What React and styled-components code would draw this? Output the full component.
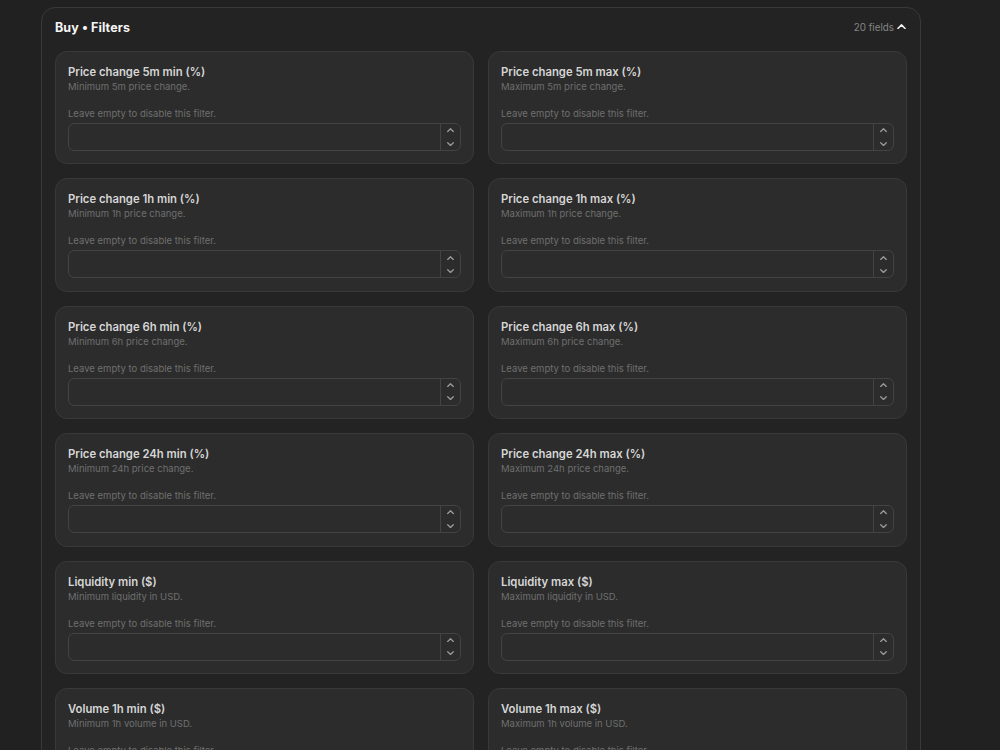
import React from 'react';
import styled, { createGlobalStyle } from 'styled-components';

const fields = [
    ['Price change 5m min (%)', 'Minimum 5m price change.'],
    ['Price change 5m max (%)', 'Maximum 5m price change.'],
    ['Price change 1h min (%)', 'Minimum 1h price change.'],
    ['Price change 1h max (%)', 'Maximum 1h price change.'],
    ['Price change 6h min (%)', 'Minimum 6h price change.'],
    ['Price change 6h max (%)', 'Maximum 6h price change.'],
    ['Price change 24h min (%)', 'Minimum 24h price change.'],
    ['Price change 24h max (%)', 'Maximum 24h price change.'],
    ['Liquidity min ($)', 'Minimum liquidity in USD.'],
    ['Liquidity max ($)', 'Maximum liquidity in USD.'],
    ['Volume 1h min ($)', 'Minimum 1h volume in USD.'],
    ['Volume 1h max ($)', 'Maximum 1h volume in USD.'],
    ['Volume 24h min ($)', 'Minimum 24h volume in USD.'],
    ['Volume 24h max ($)', 'Maximum 24h volume in USD.'],
];

const Chevron = ({ up, size = 8, color = '#9a9a9a', width = 1.3 }) => (
    <svg width={size} height={size * 0.6} viewBox="0 0 10 6" fill="none">
        <path
            d={up ? 'M1 5L5 1L9 5' : 'M1 1L5 5L9 1'}
            stroke={color}
            strokeWidth={width * (10 / size)}
            strokeLinecap="round"
            strokeLinejoin="round"
        />
    </svg>
);

const App = () => {
    return (
        <Page>
            <GlobalStyle />
            <Panel>
                <Header>
                    <Title>Buy • Filters</Title>
                    <Count>
                        20 fields
                        <Chevron up size={9} color="#f2f2f2" width={1.5} />
                    </Count>
                </Header>
                <Grid>
                    {fields.map(([label, desc]) => (
                        <Card key={label}>
                            <Label>{label}</Label>
                            <Desc>{desc}</Desc>
                            <Hint>Leave empty to disable this filter.</Hint>
                            <InputBox>
                                <Field type="text" />
                                <Spinner>
                                    <Chevron up size={7} />
                                    <Chevron size={7} />
                                </Spinner>
                            </InputBox>
                        </Card>
                    ))}
                </Grid>
            </Panel>
        </Page>
    );
};

const GlobalStyle = createGlobalStyle`
  html, body {
    margin: 0;
    background: #212121;
    font-family: Inter, "Noto Sans", sans-serif;
    overflow: hidden;
  }
`;

const Page = styled.div`
  padding: 7px 0 0 41px;
  height: 750px;
  box-sizing: border-box;
`;

const Panel = styled.div`
  width: 880px;
  box-sizing: border-box;
  background: #232323;
  border: 1px solid #393939;
  border-radius: 14px;
  padding: 0 13px 20px 13px;
`;

const Header = styled.div`
  display: flex;
  align-items: center;
  justify-content: space-between;
  height: 43px;
  padding-bottom: 4px;
  box-sizing: border-box;
`;

const Title = styled.div`
  color: #f5f5f5;
  font-size: 12.5px;
  font-weight: 700;
  letter-spacing: 0.1px;
`;

const Count = styled.div`
  display: flex;
  align-items: center;
  gap: 3px;
  color: #858585;
  font-size: 9.8px;
  margin-right: 1px;
  svg {
    margin-top: -2px;
  }
`;

const Grid = styled.div`
  display: grid;
  grid-template-columns: 1fr 1fr;
  gap: 14px;
`;

const Card = styled.div`
  background: #2c2c2c;
  border: 1px solid #393939;
  border-radius: 12px;
  padding: 13px 12px 12.4px 12px;
  display: flex;
  flex-direction: column;
`;

const Label = styled.div`
  color: #d6d6d6;
  font-size: 11.3px;
  font-weight: 600;
  line-height: 14px;
`;

const Desc = styled.div`
  color: #6f6f6f;
  font-size: 9.5px;
  line-height: 13px;
  margin-top: 1px;
`;

const Hint = styled.div`
  color: #6f6f6f;
  font-size: 9.5px;
  line-height: 13px;
  margin-top: 14px;
`;

const InputBox = styled.div`
  margin-top: 3px;
  height: 28px;
  box-sizing: border-box;
  border: 1px solid #434343;
  border-radius: 6px;
  display: flex;
  overflow: hidden;
`;

const Field = styled.input`
  flex: 1;
  background: transparent;
  border: none;
  outline: none;
  color: #ddd;
  padding: 0 8px;
  font-size: 11px;
`;

const Spinner = styled.div`
  width: 19px;
  border-left: 1px solid #434343;
  display: flex;
  flex-direction: column;
  align-items: center;
  justify-content: center;
  gap: 9px;
`;

export default App;
